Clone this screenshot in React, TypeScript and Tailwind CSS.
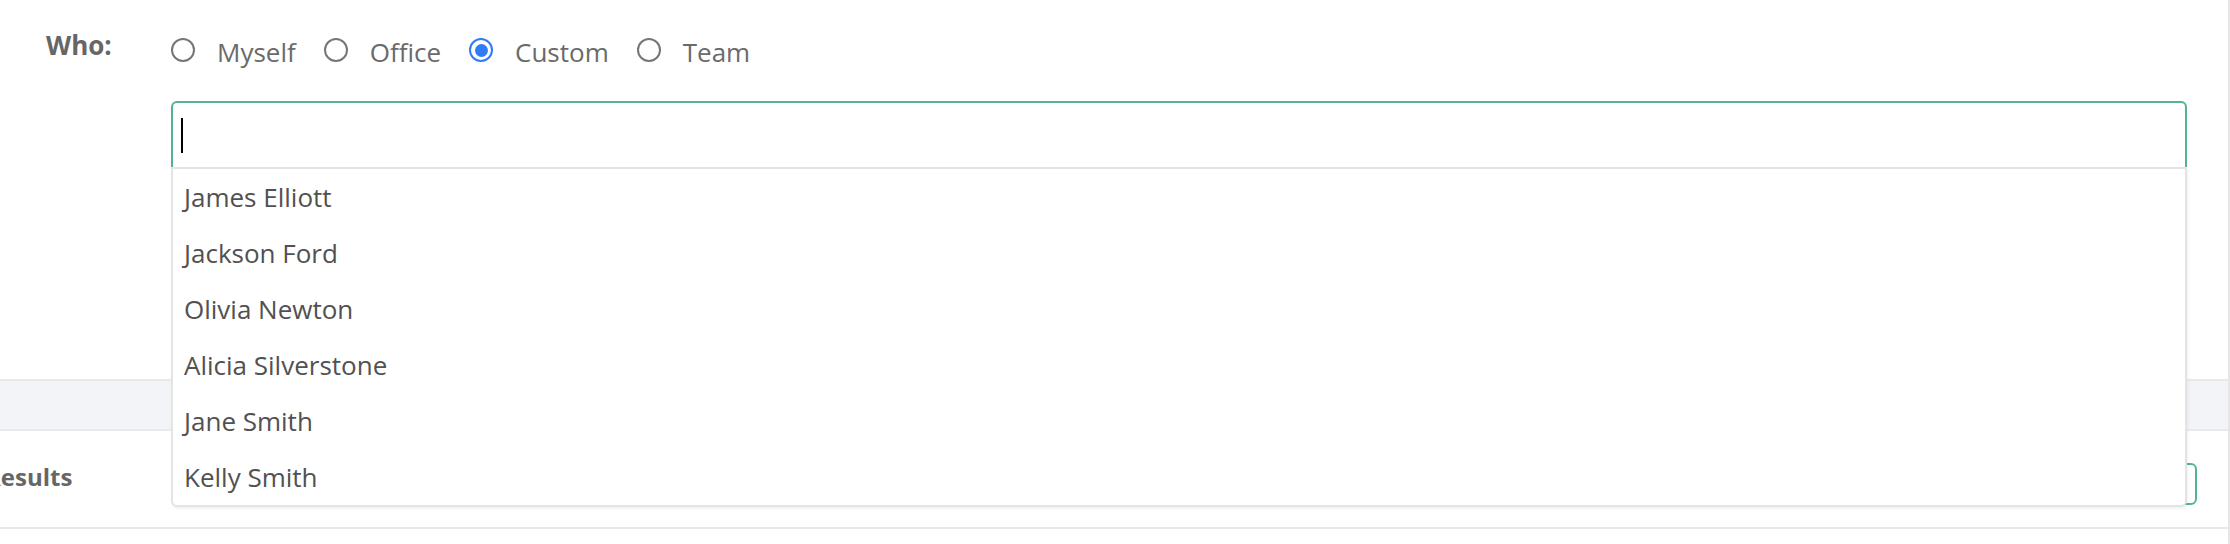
import React from "react";

const options = [
  { label: "Myself", checked: false },
  { label: "Office", checked: false },
  { label: "Custom", checked: true },
  { label: "Team", checked: false },
];

const people = [
  "James Elliott",
  "Jackson Ford",
  "Olivia Newton",
  "Alicia Silverstone",
  "Jane Smith",
  "Kelly Smith",
];

function Radio({ checked }: { checked: boolean }) {
  if (checked) {
    return (
      <span className="mb-[4px] flex h-[24px] w-[24px] shrink-0 items-center justify-center rounded-full border-[2.5px] border-[#2f7cf6] bg-white">
        <span className="h-[13px] w-[13px] rounded-full bg-[#2f7cf6]" />
      </span>
    );
  }
  return (
    <span className="mb-[4px] h-[24px] w-[24px] shrink-0 rounded-full border-2 border-[#767676] bg-white" />
  );
}

export default function App() {
  return (
    <div className="h-[544px] w-[2230px] overflow-hidden bg-white font-['Open_Sans',sans-serif]">
      <div className="h-[544px] w-[2230px] border-r-2 border-[#e6e6e6]">
        {/* Who section */}
        <div className="flex h-[379px] pl-[46px] pt-[32px]">
          <div className="w-[125px] shrink-0 text-[26px] font-bold leading-[26px] text-[#666666]">
            Who:
          </div>
          <div className="flex flex-col pt-[5px]">
            <div className="flex h-[30px] items-center gap-[28px]">
              {options.map((o) => (
                <label key={o.label} className="flex items-center">
                  <Radio checked={o.checked} />
                  <span className="ml-[22px] text-[26px] leading-[30px] text-[#6a6a6a]">
                    {o.label}
                  </span>
                </label>
              ))}
            </div>
            <div className="relative z-10 mt-[34px] w-[2016px]">
              <div className="flex h-[66px] items-center rounded-t-[6px] border-2 border-b-0 border-[#55b394] bg-white pl-[8px]">
                <span className="h-[35px] w-[2px] bg-black" />
              </div>
              <div className="absolute left-0 right-0 top-full rounded-b-[6px] border-2 border-[#e4e4e4] bg-white shadow-[1px_2px_3px_rgba(0,0,0,0.06)]">
                {people.map((p) => (
                  <div
                    key={p}
                    className="flex h-[56px] items-center px-[11px] text-[26px] leading-[36px] text-[#515151]"
                  >
                    {p}
                  </div>
                ))}
              </div>
            </div>
          </div>
        </div>

        {/* gray band */}
        <div className="h-[52px] border-y-2 border-[#e8e9eb] bg-[#f3f4f8]" />

        {/* Results section */}
        <div className="flex h-[98px] items-start border-b-2 border-[#e8e8e8]">
          <div className="w-[171px] shrink-0 pt-[34px]">
            <span className="-ml-[15px] block whitespace-nowrap text-[24px] font-bold leading-[24px] text-[#666666]">
              Results
            </span>
          </div>
          <div className="mt-[32px] h-[42px] w-[2026px] rounded-[6px] border-2 border-[#55b394] bg-white" />
        </div>
      </div>
    </div>
  );
}
